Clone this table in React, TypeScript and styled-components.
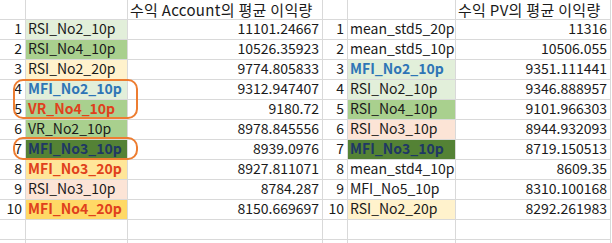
import React from "react";
import styled, { createGlobalStyle } from "styled-components";

const GlobalStyle = createGlobalStyle`
  html, body { margin: 0; padding: 0; background: #ffffff; }
  body { font-family: "Noto Sans CJK KR", "Noto Sans", sans-serif; }
`;

type Tone = "normal" | "blue" | "red" | "navy";

interface Entry {
  name: string;
  value: string;
  fill?: string;
  tone?: Tone;
}

const left: Entry[] = [
  { name: "RSI_No2_10p", value: "11101.24667", fill: "#e2efda" },
  { name: "RSI_No4_10p", value: "10526.35923", fill: "#a9d08e" },
  { name: "RSI_No2_20p", value: "9774.805833", fill: "#fff2cc" },
  { name: "MFI_No2_10p", value: "9312.947407", fill: "#e2efda", tone: "blue" },
  { name: "VR_No4_10p", value: "9180.72", fill: "#a9d08e", tone: "red" },
  { name: "VR_No2_10p", value: "8978.845556", fill: "#a9d08e" },
  { name: "MFI_No3_10p", value: "8939.0976", fill: "#548235", tone: "navy" },
  { name: "MFI_No3_20p", value: "8927.811071", fill: "#ffe699", tone: "red" },
  { name: "RSI_No3_10p", value: "8784.287", fill: "#fce4d6" },
  { name: "MFI_No4_20p", value: "8150.669697", fill: "#ffd966", tone: "red" },
];

const right: Entry[] = [
  { name: "mean_std5_20p", value: "11316" },
  { name: "mean_std5_10p", value: "10506.055" },
  { name: "MFI_No2_10p", value: "9351.111441", fill: "#e2efda", tone: "blue" },
  { name: "RSI_No2_10p", value: "9346.888957", fill: "#e2efda" },
  { name: "RSI_No4_10p", value: "9101.966303", fill: "#a9d08e" },
  { name: "RSI_No3_10p", value: "8944.932093", fill: "#fce4d6" },
  { name: "MFI_No3_10p", value: "8719.150513", fill: "#548235", tone: "navy" },
  { name: "mean_std4_10p", value: "8609.35" },
  { name: "MFI_No5_10p", value: "8310.100168" },
  { name: "RSI_No2_20p", value: "8292.261983", fill: "#fff2cc" },
];

const toneColor: Record<Tone, string> = {
  normal: "#1a1a1a",
  blue: "#2e75b6",
  red: "#e0401c",
  navy: "#1f3864",
};

const Sheet = styled.div`
  position: relative;
  width: 612px;
  height: 243px;
  overflow: hidden;
  display: grid;
  grid-template-columns: 26px 102px 195px 25px 108px 155px;
  grid-auto-rows: 20px;
  font-size: 14px;
  color: #1a1a1a;
`;

const Cell = styled.div<{ $fill?: string; $align?: "left" | "right" }>`
  box-sizing: border-box;
  border-right: 1px solid #d9d9d9;
  border-bottom: 1px solid #d9d9d9;
  background: ${(p) => p.$fill ?? "#ffffff"};
  display: flex;
  align-items: center;
  justify-content: ${(p) => (p.$align === "right" ? "flex-end" : "flex-start")};
  padding: 0 3px 2px 2px;
  white-space: nowrap;
  overflow: visible;
  line-height: 17px;
`;

const HeaderCell = styled(Cell)`
  font-size: 15px;
  letter-spacing: 0.3px;
  padding: 1px 3px 0 2px;
  line-height: 18px;
`;

const Name = styled.span<{ $tone: Tone }>`
  position: relative;
  z-index: 1;
  color: ${(p) => toneColor[p.$tone]};
  font-weight: ${(p) => (p.$tone === "normal" ? 400 : 700)};
`;

const Highlight = styled.div`
  position: absolute;
  z-index: 2;
  box-sizing: border-box;
  border: 2.5px solid #ed7d31;
  border-radius: 10px;
  pointer-events: none;
`;

export default function App() {
  const blankRows = [0, 1, 2];
  return (
    <>
      <GlobalStyle />
      <Sheet>
        <HeaderCell />
        <HeaderCell />
        <HeaderCell>수익 Account의 평균 이익량</HeaderCell>
        <HeaderCell />
        <HeaderCell />
        <HeaderCell>수익 PV의 평균 이익량</HeaderCell>
        {left.map((l, i) => {
          const r = right[i];
          return (
            <React.Fragment key={i}>
              <Cell $align="right">{i + 1}</Cell>
              <Cell $fill={l.fill}>
                <Name $tone={l.tone ?? "normal"}>{l.name}</Name>
              </Cell>
              <Cell $align="right">{l.value}</Cell>
              <Cell $align="right">{i + 1}</Cell>
              <Cell $fill={r.fill}>
                <Name $tone={r.tone ?? "normal"}>{r.name}</Name>
              </Cell>
              <Cell $align="right">{r.value}</Cell>
            </React.Fragment>
          );
        })}
        {blankRows.map((b) => (
          <React.Fragment key={`b${b}`}>
            <Cell />
            <Cell />
            <Cell />
            <Cell />
            <Cell />
            <Cell />
          </React.Fragment>
        ))}
        <Highlight style={{ left: 13, top: 79, width: 125, height: 40 }} />
        <Highlight style={{ left: 13, top: 137, width: 125, height: 23 }} />
      </Sheet>
    </>
  );
}
